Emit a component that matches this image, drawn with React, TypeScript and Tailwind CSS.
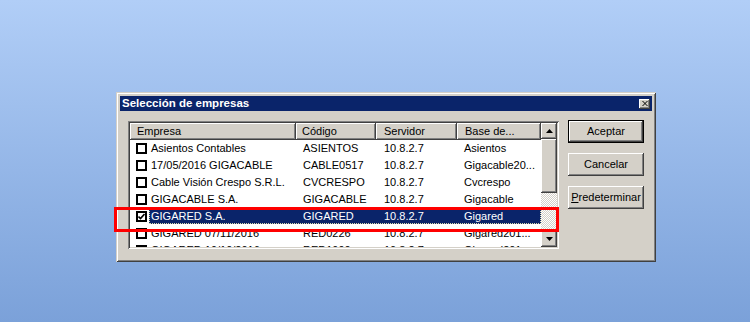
import React from "react";

const rows: [string, string, string, string][] = [
  ["Asientos Contables", "ASIENTOS", "10.8.2.7", "Asientos"],
  ["17/05/2016 GIGACABLE", "CABLE0517", "10.8.2.7", "Gigacable20..."],
  ["Cable Visión Crespo S.R.L.", "CVCRESPO", "10.8.2.7", "Cvcrespo"],
  ["GIGACABLE S.A.", "GIGACABLE", "10.8.2.7", "Gigacable"],
  ["GIGARED S.A.", "GIGARED", "10.8.2.7", "Gigared"],
  ["GIGARED 07/11/2016", "RED0226", "10.8.2.7", "Gigared201..."],
  ["GIGARED 19/10/2016", "RED1990", "10.8.2.7", "Gigared201..."],
];

const raised =
  "bg-[#d4d0c8] shadow-[inset_-1px_-1px_#404040,inset_1px_1px_#ffffff,inset_-2px_-2px_#808080,inset_2px_2px_#d4d0c8]";

function Check({ checked }: { checked: boolean }) {
  return (
    <div className="w-[11px] h-[11px] border-2 border-black bg-white flex items-center justify-center">
      {checked && (
        <svg width="7" height="7" viewBox="0 0 7 7">
          <path d="M0.5 3.5 L2.5 5.5 L6.5 1" stroke="black" strokeWidth="1.6" fill="none" />
        </svg>
      )}
    </div>
  );
}

export default function App() {
  return (
    <div className="w-[750px] h-[322px] bg-linear-to-b from-[#b1cef7] to-[#7ba1d9] pt-[92px] pl-[116px] font-['Liberation_Sans',Arial,sans-serif] text-[11px] text-black leading-none">
      <div className="w-[540px] h-[170px] bg-[#d4d0c8] p-[4px] flex flex-col shadow-[inset_1px_1px_#d4d0c8,inset_-1px_-1px_#404040,inset_2px_2px_#ffffff,inset_-2px_-2px_#808080]">
        {/* Title bar */}
        <div className="h-[15px] bg-[#0a246a] flex items-center justify-between pl-[2px] pr-[2px]">
          <span className="text-white font-bold text-[11.5px]">Selección de empresas</span>
          <div className={`w-[11px] h-[10px] flex items-center justify-center ${raised}`}>
            <svg width="6" height="5" viewBox="0 0 6 5">
              <path d="M0.5 0 L5.5 5 M5.5 0 L0.5 5" stroke="black" strokeWidth="1" />
            </svg>
          </div>
        </div>

        <div className="flex mt-[10px] px-[8px] gap-[9px]">
          {/* List */}
          <div className="relative w-[431px] h-[128px] p-[2px] bg-white shadow-[inset_1px_1px_#808080,inset_-1px_-1px_#ffffff,inset_2px_2px_#404040,inset_-2px_-2px_#d4d0c8] flex">
            <div className="w-[411px] h-[124px] overflow-hidden flex flex-col">
              {/* header */}
              <div className="flex h-[17px] shrink-0">
                <div className={`w-[166px] flex items-center pl-[7px] ${raised}`}>Empresa</div>
                <div className={`w-[80px] flex items-center pl-[6px] ${raised}`}>Código</div>
                <div className={`w-[81px] flex items-center pl-[8px] ${raised}`}>Servidor</div>
                <div className={`w-[84px] flex items-center pl-[8px] ${raised}`}>Base de...</div>
              </div>
              {rows.map((r, i) => {
                const sel = i === 4;
                return (
                  <div key={i} className="flex h-[17px] shrink-0 items-center">
                    <div className="w-[19px] pl-[6px] flex items-center">
                      <Check checked={sel} />
                    </div>
                    <div
                      className={`flex h-[15px] items-center w-[392px] ${
                        sel ? "bg-[#0a246a] text-white outline outline-dotted outline-[#d8d8b0] -outline-offset-1" : ""
                      }`}
                    >
                      <div className="w-[147px] pl-[2px] whitespace-nowrap">{r[0]}</div>
                      <div className="w-[80px] pl-[7px] whitespace-nowrap">{r[1]}</div>
                      <div className="w-[81px] pl-[8px] whitespace-nowrap">{r[2]}</div>
                      <div className="w-[84px] pl-[7px] whitespace-nowrap">{r[3]}</div>
                    </div>
                  </div>
                );
              })}
            </div>
            {/* scrollbar */}
            <div className="w-[16px] h-[124px] flex flex-col">
              <div className={`h-[16px] flex items-center justify-center ${raised}`}>
                <svg width="7" height="4" viewBox="0 0 7 4">
                  <path d="M3.5 0 L7 4 L0 4 Z" fill="black" />
                </svg>
              </div>
              <div className={`h-[54px] ${raised}`} />
              <div className="flex-1 bg-[repeating-conic-gradient(#d4d0c8_0_25%,#ffffff_0_50%)] bg-[length:2px_2px]" />
              <div className={`h-[16px] flex items-center justify-center ${raised}`}>
                <svg width="7" height="4" viewBox="0 0 7 4">
                  <path d="M0 0 L7 0 L3.5 4 Z" fill="black" />
                </svg>
              </div>
            </div>
            {/* red highlight annotation */}
            <div className="absolute left-[-14px] top-[86px] w-[445px] h-[25px] border-[3px] border-[#ff0000]" />
          </div>

          {/* Buttons */}
          <div className="w-[76px] flex flex-col gap-[10px] -mt-[1px]">
            <div className="h-[23px] border border-black">
              <div className={`h-full flex items-center justify-center ${raised}`}>Aceptar</div>
            </div>
            <div className={`h-[23px] flex items-center justify-center ${raised}`}>Cancelar</div>
            <div className={`h-[23px] flex items-center justify-center ${raised}`}>
              <span>
                <span className="underline">P</span>redeterminar
              </span>
            </div>
          </div>
        </div>
      </div>
    </div>
  );
}
